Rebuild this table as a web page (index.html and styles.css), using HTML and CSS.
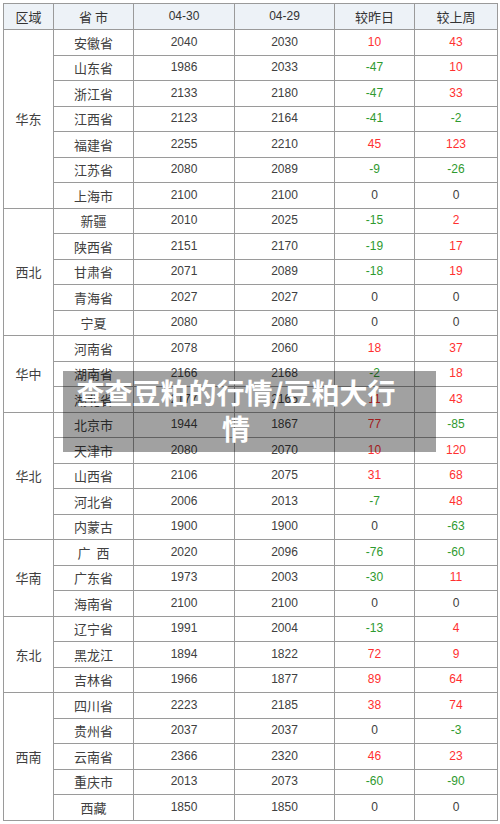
FILE: index.html
```html
<!DOCTYPE html>
<html lang="zh-CN">
<head>
<meta charset="utf-8">
<title>豆粕行情</title>
<link rel="stylesheet" href="styles.css">
</head>
<body>
<div class="wrap">
<table class="price">
<colgroup>
<col class="c-region"><col class="c-prov"><col class="c-d1"><col class="c-d2"><col class="c-chg"><col class="c-week">
</colgroup>
<thead>
<tr><th>区域</th><th>省&nbsp;市</th><th class="num">04-30</th><th class="num">04-29</th><th>较昨日</th><th>较上周</th></tr>
</thead>
<tbody>
<tr><td rowspan="7" class="region">华东</td><td>安徽省</td><td class="num">2040</td><td class="num">2030</td><td class="num up">10</td><td class="num up">43</td></tr>
<tr><td>山东省</td><td class="num">1986</td><td class="num">2033</td><td class="num down">-47</td><td class="num up">10</td></tr>
<tr><td>浙江省</td><td class="num">2133</td><td class="num">2180</td><td class="num down">-47</td><td class="num up">33</td></tr>
<tr><td>江西省</td><td class="num">2123</td><td class="num">2164</td><td class="num down">-41</td><td class="num down">-2</td></tr>
<tr><td>福建省</td><td class="num">2255</td><td class="num">2210</td><td class="num up">45</td><td class="num up">123</td></tr>
<tr><td>江苏省</td><td class="num">2080</td><td class="num">2089</td><td class="num down">-9</td><td class="num down">-26</td></tr>
<tr><td>上海市</td><td class="num">2100</td><td class="num">2100</td><td class="num">0</td><td class="num">0</td></tr>

<tr><td rowspan="5" class="region">西北</td><td>新疆</td><td class="num">2010</td><td class="num">2025</td><td class="num down">-15</td><td class="num up">2</td></tr>
<tr><td>陕西省</td><td class="num">2151</td><td class="num">2170</td><td class="num down">-19</td><td class="num up">17</td></tr>
<tr><td>甘肃省</td><td class="num">2071</td><td class="num">2089</td><td class="num down">-18</td><td class="num up">19</td></tr>
<tr><td>青海省</td><td class="num">2027</td><td class="num">2027</td><td class="num">0</td><td class="num">0</td></tr>
<tr><td>宁夏</td><td class="num">2080</td><td class="num">2080</td><td class="num">0</td><td class="num">0</td></tr>

<tr><td rowspan="3" class="region">华中</td><td>河南省</td><td class="num">2078</td><td class="num">2060</td><td class="num up">18</td><td class="num up">37</td></tr>
<tr><td>湖南省</td><td class="num">2166</td><td class="num">2168</td><td class="num down">-2</td><td class="num up">18</td></tr>
<tr><td>湖北省</td><td class="num">2177</td><td class="num">2166</td><td class="num up">11</td><td class="num up">43</td></tr>

<tr><td rowspan="5" class="region">华北</td><td>北京市</td><td class="num">1944</td><td class="num">1867</td><td class="num up">77</td><td class="num down">-85</td></tr>
<tr><td>天津市</td><td class="num">2080</td><td class="num">2070</td><td class="num up">10</td><td class="num up">120</td></tr>
<tr><td>山西省</td><td class="num">2106</td><td class="num">2075</td><td class="num up">31</td><td class="num up">68</td></tr>
<tr><td>河北省</td><td class="num">2006</td><td class="num">2013</td><td class="num down">-7</td><td class="num up">48</td></tr>
<tr><td>内蒙古</td><td class="num">1900</td><td class="num">1900</td><td class="num">0</td><td class="num down">-63</td></tr>

<tr><td rowspan="3" class="region">华南</td><td>广&nbsp;&nbsp;西</td><td class="num">2020</td><td class="num">2096</td><td class="num down">-76</td><td class="num down">-60</td></tr>
<tr><td>广东省</td><td class="num">1973</td><td class="num">2003</td><td class="num down">-30</td><td class="num up">11</td></tr>
<tr><td>海南省</td><td class="num">2100</td><td class="num">2100</td><td class="num">0</td><td class="num">0</td></tr>

<tr><td rowspan="3" class="region">东北</td><td>辽宁省</td><td class="num">1991</td><td class="num">2004</td><td class="num down">-13</td><td class="num up">4</td></tr>
<tr><td>黑龙江</td><td class="num">1894</td><td class="num">1822</td><td class="num up">72</td><td class="num up">9</td></tr>
<tr><td>吉林省</td><td class="num">1966</td><td class="num">1877</td><td class="num up">89</td><td class="num up">64</td></tr>

<tr><td rowspan="5" class="region">西南</td><td>四川省</td><td class="num">2223</td><td class="num">2185</td><td class="num up">38</td><td class="num up">74</td></tr>
<tr><td>贵州省</td><td class="num">2037</td><td class="num">2037</td><td class="num">0</td><td class="num down">-3</td></tr>
<tr><td>云南省</td><td class="num">2366</td><td class="num">2320</td><td class="num up">46</td><td class="num up">23</td></tr>
<tr><td>重庆市</td><td class="num">2013</td><td class="num">2073</td><td class="num down">-60</td><td class="num down">-90</td></tr>
<tr><td>西藏</td><td class="num">1850</td><td class="num">1850</td><td class="num">0</td><td class="num">0</td></tr>
</tbody>
</table>
<div class="banner"><p class="banner-text">查查豆粕的行情/豆粕大行情</p></div>
</div>
</body>
</html>
```
FILE: styles.css
```css
html, body {
  margin: 0;
  padding: 0;
  background: #ffffff;
}
.wrap {
  position: relative;
  padding: 3px 0 0 3px;
  width: 500px;
  height: 824px;
  box-sizing: border-box;
}
.price {
  border-collapse: collapse;
  table-layout: fixed;
  width: 494px;
  font-family: "Noto Sans CJK SC", sans-serif;
  font-size: 13px;
  color: #404040;
}
.c-region { width: 50px; }
.c-prov { width: 80px; }
.c-d1 { width: 101px; }
.c-d2 { width: 100px; }
.c-chg { width: 80px; }
.c-week { width: 83px; }
.price th,
.price td {
  border: 1px solid #9a9a9a;
  text-align: center;
  vertical-align: middle;
  padding: 0;
  font-weight: normal;
  line-height: 15px;
}
.price th {
  height: 25px;
  background: #edf2f7;
  color: #333333;
}
.price td {
  height: 24.5px;
}
.price .num {
  font-family: "Liberation Sans", sans-serif;
  font-size: 12px;
}
.price .up { color: #ff3030; }
.price .down { color: #2f9a2f; }
.banner {
  position: absolute;
  left: 63px;
  top: 371px;
  width: 373px;
  height: 81px;
  background: rgba(0, 0, 0, 0.37);
}
.banner-text {
  margin: 0;
  padding: 3px 39px 0 12px;
  text-align: center;
  font-family: "Noto Sans CJK SC", sans-serif;
  font-weight: bold;
  font-size: 28px;
  line-height: 36px;
  color: #ffffff;
}
```
